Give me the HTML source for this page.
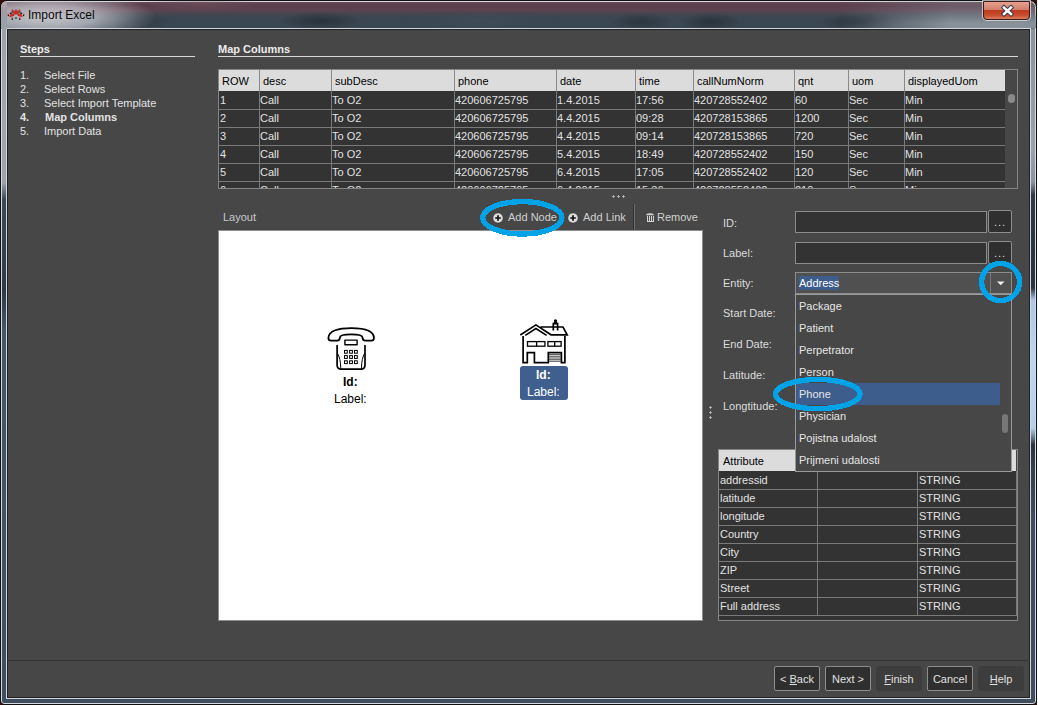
<!DOCTYPE html><html><head><meta charset="utf-8"><style>*{margin:0;padding:0;box-sizing:border-box}
html,body{width:1038px;height:705px;overflow:hidden;background:#3a0c0c}
body{position:relative;font-family:"Liberation Sans",sans-serif;font-size:11px;color:#e2e2e2}
.a{position:absolute}
.t{position:absolute;line-height:13px;white-space:nowrap}
#frame{left:0;top:0;width:1037px;height:705px;border-radius:7px 7px 4px 4px;border:1px solid #101010;
 box-shadow:inset 0 0 0 1px #d8dce2;
 background:linear-gradient(180deg,#6a5058 0px,#5a3e4c 4px,#5e4250 9px,#44464f 13px,#3a4652 17px,#3a4652 27px,#9aa2aa 28px,#a0a6ae 120px,#9aa2aa 182px,#3c4a58 198px,#2e3a46 290px,#44586a 330px,#3e4e5e 700px);}
#tglow{left:1px;top:1px;width:1035px;height:27px;border-radius:6px 6px 0 0;
 background:radial-gradient(ellipse 110px 26px at 45px 16px,rgba(220,218,222,0.88) 0,rgba(205,205,212,0.7) 45%,rgba(210,210,215,0) 100%),
  radial-gradient(ellipse 40px 9px at 320px 20px,rgba(30,38,46,0.6),rgba(30,38,46,0)),
  radial-gradient(ellipse 30px 9px at 140px 20px,rgba(40,50,60,0.5),rgba(40,50,60,0)),
  radial-gradient(ellipse 30px 9px at 710px 21px,rgba(30,38,46,0.6),rgba(30,38,46,0)),
  radial-gradient(ellipse 30px 9px at 640px 21px,rgba(30,38,46,0.5),rgba(30,38,46,0)),
  radial-gradient(ellipse 40px 9px at 860px 21px,rgba(30,38,46,0.6),rgba(30,38,46,0)),
  radial-gradient(ellipse 80px 10px at 480px 20px,rgba(75,88,100,0.35),rgba(75,88,100,0)),
  radial-gradient(ellipse 60px 8px at 200px 3px,rgba(120,90,100,0.4),rgba(120,90,100,0));}
#rglow{left:840px;top:1px;width:196px;height:27px;border-radius:0 6px 0 0;
 background:linear-gradient(180deg,rgba(150,156,164,0.25) 0,rgba(150,156,164,0.35) 8px,rgba(140,148,156,0.95) 22px);
 -webkit-mask-image:linear-gradient(90deg,transparent 0,#000 110px);}
#content{left:6px;top:28px;width:1025px;height:671px;background:#474747;border:1px solid #d4d8dc;box-shadow:inset 0 0 0 1px #1e2228}
#close{left:983px;top:1px;width:47px;height:19px;border-radius:0 0 4px 4px;border:1px solid #3a1a1a;box-shadow:0 0 0 1px rgba(235,235,240,0.7);
 background:linear-gradient(180deg,#e8a090 0%,#d0806c 45%,#c03a20 50%,#c85030 80%,#d88060 100%)}
.hl{position:absolute;height:1px;background:#d8d8d8}
.grid{position:absolute;background:#7a7a7a}
.hdr{position:absolute;background:#dcdcdc;color:#000}
.fld{position:absolute;background:#333;border:1px solid #8c8c8c}
.btn{position:absolute;border:1px solid #8e8e8e;border-radius:2px;background:#2f2f2f}
.btnd{position:absolute;border-radius:3px;background:#3d3d3d}
</style></head><body>
<div id="frame" class="a"></div>
<div id="tglow" class="a"></div>
<div id="rglow" class="a"></div>
<div class="a" style="left:1031px;top:29px;width:4px;height:670px;background:linear-gradient(180deg,#8a929a 0px,#9aa2aa 121px,#8a949e 153px,#2e3a46 166px,#2a3440 259px,#a8c8e8 271px,#b8d8f4 331px,#b0d0f0 399px,#2a3440 416px,#34414e 441px,#3e4e5e 491px,#3e4e5e 670px)"></div>
<div id="content" class="a"></div>
<div class="a" style="left:1037px;top:0;width:1px;height:705px;background:#fff"></div>
<div class="a" id="close"><svg width="47" height="19" viewBox="0 0 47 19" style="position:absolute;left:-1px;top:-1px"><path d="M21 6.6 L28 13 M28 6.6 L21 13" stroke="#2a3444" stroke-width="4.4" stroke-linecap="square"/><path d="M21 6.6 L28 13 M28 6.6 L21 13" stroke="#fff" stroke-width="2.6" stroke-linecap="square"/></svg></div>
<div class="a" style="left:1px;top:1px;width:6px;height:28px;border-radius:6px 0 0 0;background:linear-gradient(180deg,#b8a8ae 0,#a49ca2 8px,#9aa0a8 20px,#9aa2aa 28px)"></div>
<svg class="a" style="left:4px;top:6px" width="24" height="18" viewBox="0 0 24 18" style="filter:blur(0.3px)"><g fill="#c42c24"><rect x="9.2" y="4.4" width="5.6" height="4.2" rx="1"/><rect x="7.6" y="3.6" width="1.8" height="2"/><rect x="14.6" y="3.6" width="1.8" height="2"/><path d="M9.8 7.2 L5.6 8.8 L5.8 11.2 L10.4 9.8 Z M14.2 7.2 L18.4 8.8 L18.2 11.2 L13.6 9.8 Z"/><rect x="3.6" y="7.8" width="1.3" height="1.3"/><rect x="19.1" y="7.8" width="1.3" height="1.3"/><rect x="7.5" y="11.6" width="1.4" height="1.2"/><rect x="15.1" y="11.6" width="1.4" height="1.2"/></g><g fill="#1c1c1c"><rect x="5.8" y="6.6" width="2" height="1.4" rx="0.6"/><rect x="16.2" y="6.6" width="2" height="1.4" rx="0.6"/><rect x="3.8" y="9" width="1.2" height="1.2"/><rect x="19" y="9" width="1.2" height="1.2"/><rect x="7.6" y="12.6" width="1.4" height="1.3"/><rect x="15" y="12.6" width="1.4" height="1.3"/><rect x="10.8" y="11.6" width="2.4" height="1" rx="0.5"/><rect x="10.8" y="3.6" width="2.4" height="1" rx="0.5" fill="#555"/><rect x="7.6" y="5.6" width="1.6" height="1" /><rect x="14.8" y="5.6" width="1.6" height="1"/></g></svg>
<div class="t" style="left:28px;top:9px;font-size:12px;color:#0a0a0a">Import Excel</div>
<div class="t" style="left:20px;top:43px;font-weight:bold;color:#ececec">Steps</div>
<div class="hl" style="left:20px;top:56px;width:175px"></div>
<div class="t" style="left:20px;top:69px;">1.</div>
<div class="t" style="left:44px;top:69px;">Select File</div>
<div class="t" style="left:20px;top:83px;">2.</div>
<div class="t" style="left:44px;top:83px;">Select Rows</div>
<div class="t" style="left:20px;top:97px;">3.</div>
<div class="t" style="left:44px;top:97px;">Select Import Template</div>
<div class="t" style="left:20px;top:111px;font-weight:bold">4.</div>
<div class="t" style="left:45px;top:111px;font-weight:bold">Map Columns</div>
<div class="t" style="left:20px;top:125px;">5.</div>
<div class="t" style="left:44px;top:125px;">Import Data</div>
<div class="t" style="left:218px;top:43px;font-weight:bold;color:#ececec">Map Columns</div>
<div class="hl" style="left:218px;top:56px;width:800px"></div>
<div class="a" style="left:218px;top:69px;width:800px;height:120px;border:1px solid #858585;background:#474747"></div>
<div class="a" style="left:219px;top:70px;width:786px;height:118px;overflow:hidden;background:#333">
<div class="hdr" style="left:0;top:0;width:786px;height:21px"></div>
<div class="t" style="left:3px;top:5px;color:#000">ROW</div>
<div class="a" style="left:40px;top:0;width:1px;height:21px;background:#8a8a8a"></div>
<div class="t" style="left:44px;top:5px;color:#000">desc</div>
<div class="a" style="left:112px;top:0;width:1px;height:21px;background:#8a8a8a"></div>
<div class="t" style="left:116px;top:5px;color:#000">subDesc</div>
<div class="a" style="left:235px;top:0;width:1px;height:21px;background:#8a8a8a"></div>
<div class="t" style="left:239px;top:5px;color:#000">phone</div>
<div class="a" style="left:337px;top:0;width:1px;height:21px;background:#8a8a8a"></div>
<div class="t" style="left:341px;top:5px;color:#000">date</div>
<div class="a" style="left:416px;top:0;width:1px;height:21px;background:#8a8a8a"></div>
<div class="t" style="left:420px;top:5px;color:#000">time</div>
<div class="a" style="left:474px;top:0;width:1px;height:21px;background:#8a8a8a"></div>
<div class="t" style="left:478px;top:5px;color:#000">callNumNorm</div>
<div class="a" style="left:575px;top:0;width:1px;height:21px;background:#8a8a8a"></div>
<div class="t" style="left:579px;top:5px;color:#000">qnt</div>
<div class="a" style="left:629px;top:0;width:1px;height:21px;background:#8a8a8a"></div>
<div class="t" style="left:633px;top:5px;color:#000">uom</div>
<div class="a" style="left:685px;top:0;width:1px;height:21px;background:#8a8a8a"></div>
<div class="t" style="left:689px;top:5px;color:#000">displayedUom</div>
<div class="t" style="left:1px;top:24px">1</div>
<div class="t" style="left:41px;top:24px">Call</div>
<div class="t" style="left:113px;top:24px">To O2</div>
<div class="t" style="left:236px;top:24px">420606725795</div>
<div class="t" style="left:338px;top:24px">1.4.2015</div>
<div class="t" style="left:417px;top:24px">17:56</div>
<div class="t" style="left:475px;top:24px">420728552402</div>
<div class="t" style="left:576px;top:24px">60</div>
<div class="t" style="left:630px;top:24px">Sec</div>
<div class="t" style="left:686px;top:24px">Min</div>
<div class="grid" style="left:0;top:39px;width:786px;height:1px"></div>
<div class="t" style="left:1px;top:42px">2</div>
<div class="t" style="left:41px;top:42px">Call</div>
<div class="t" style="left:113px;top:42px">To O2</div>
<div class="t" style="left:236px;top:42px">420606725795</div>
<div class="t" style="left:338px;top:42px">4.4.2015</div>
<div class="t" style="left:417px;top:42px">09:28</div>
<div class="t" style="left:475px;top:42px">420728153865</div>
<div class="t" style="left:576px;top:42px">1200</div>
<div class="t" style="left:630px;top:42px">Sec</div>
<div class="t" style="left:686px;top:42px">Min</div>
<div class="grid" style="left:0;top:57px;width:786px;height:1px"></div>
<div class="t" style="left:1px;top:60px">3</div>
<div class="t" style="left:41px;top:60px">Call</div>
<div class="t" style="left:113px;top:60px">To O2</div>
<div class="t" style="left:236px;top:60px">420606725795</div>
<div class="t" style="left:338px;top:60px">4.4.2015</div>
<div class="t" style="left:417px;top:60px">09:14</div>
<div class="t" style="left:475px;top:60px">420728153865</div>
<div class="t" style="left:576px;top:60px">720</div>
<div class="t" style="left:630px;top:60px">Sec</div>
<div class="t" style="left:686px;top:60px">Min</div>
<div class="grid" style="left:0;top:75px;width:786px;height:1px"></div>
<div class="t" style="left:1px;top:78px">4</div>
<div class="t" style="left:41px;top:78px">Call</div>
<div class="t" style="left:113px;top:78px">To O2</div>
<div class="t" style="left:236px;top:78px">420606725795</div>
<div class="t" style="left:338px;top:78px">5.4.2015</div>
<div class="t" style="left:417px;top:78px">18:49</div>
<div class="t" style="left:475px;top:78px">420728552402</div>
<div class="t" style="left:576px;top:78px">150</div>
<div class="t" style="left:630px;top:78px">Sec</div>
<div class="t" style="left:686px;top:78px">Min</div>
<div class="grid" style="left:0;top:93px;width:786px;height:1px"></div>
<div class="t" style="left:1px;top:96px">5</div>
<div class="t" style="left:41px;top:96px">Call</div>
<div class="t" style="left:113px;top:96px">To O2</div>
<div class="t" style="left:236px;top:96px">420606725795</div>
<div class="t" style="left:338px;top:96px">6.4.2015</div>
<div class="t" style="left:417px;top:96px">17:05</div>
<div class="t" style="left:475px;top:96px">420728552402</div>
<div class="t" style="left:576px;top:96px">120</div>
<div class="t" style="left:630px;top:96px">Sec</div>
<div class="t" style="left:686px;top:96px">Min</div>
<div class="grid" style="left:0;top:111px;width:786px;height:1px"></div>
<div class="t" style="left:1px;top:114px">6</div>
<div class="t" style="left:41px;top:114px">Call</div>
<div class="t" style="left:113px;top:114px">To O2</div>
<div class="t" style="left:236px;top:114px">420606725795</div>
<div class="t" style="left:338px;top:114px">6.4.2015</div>
<div class="t" style="left:417px;top:114px">15:36</div>
<div class="t" style="left:475px;top:114px">420728552402</div>
<div class="t" style="left:576px;top:114px">210</div>
<div class="t" style="left:630px;top:114px">Sec</div>
<div class="t" style="left:686px;top:114px">Min</div>
<div class="grid" style="left:0;top:129px;width:786px;height:1px"></div>
<div class="grid" style="left:40px;top:21px;width:1px;height:100px"></div>
<div class="grid" style="left:112px;top:21px;width:1px;height:100px"></div>
<div class="grid" style="left:235px;top:21px;width:1px;height:100px"></div>
<div class="grid" style="left:337px;top:21px;width:1px;height:100px"></div>
<div class="grid" style="left:416px;top:21px;width:1px;height:100px"></div>
<div class="grid" style="left:474px;top:21px;width:1px;height:100px"></div>
<div class="grid" style="left:575px;top:21px;width:1px;height:100px"></div>
<div class="grid" style="left:629px;top:21px;width:1px;height:100px"></div>
<div class="grid" style="left:685px;top:21px;width:1px;height:100px"></div>
<div class="grid" style="left:786px;top:21px;width:1px;height:100px"></div>
</div>
<div class="a" style="left:1008px;top:94px;width:7px;height:9px;border-radius:4px;background:#8a8a8a"></div>
<div class="a" style="left:612px;top:196px;width:3px;height:1px;background:#a4a4a4"></div><div class="a" style="left:613px;top:195px;width:1px;height:3px;background:#a4a4a4"></div><div class="a" style="left:613px;top:196px;width:1px;height:1px;background:#c0c0c0"></div>
<div class="a" style="left:617px;top:196px;width:3px;height:1px;background:#a4a4a4"></div><div class="a" style="left:618px;top:195px;width:1px;height:3px;background:#a4a4a4"></div><div class="a" style="left:618px;top:196px;width:1px;height:1px;background:#c0c0c0"></div>
<div class="a" style="left:622px;top:196px;width:3px;height:1px;background:#a4a4a4"></div><div class="a" style="left:623px;top:195px;width:1px;height:3px;background:#a4a4a4"></div><div class="a" style="left:623px;top:196px;width:1px;height:1px;background:#c0c0c0"></div>
<div class="t" style="left:223px;top:211px;color:#c8c8c8">Layout</div>
<svg class="a" style="left:492px;top:212px" width="12" height="12" viewBox="0 0 12 12"><circle cx="6" cy="6" r="5.1" fill="#dcdcdc" stroke="#303030" stroke-width="0.5"/><path d="M6 3.2 V8.8 M3.2 6 H8.8" stroke="#111" stroke-width="1.7"/></svg>
<div class="t" style="left:508px;top:211px;color:#d0d0d0">Add Node</div>
<svg class="a" style="left:567px;top:212px" width="12" height="12" viewBox="0 0 12 12"><circle cx="6" cy="6" r="5.1" fill="#dcdcdc" stroke="#303030" stroke-width="0.5"/><path d="M6 3.2 V8.8 M3.2 6 H8.8" stroke="#111" stroke-width="1.7"/></svg>
<div class="t" style="left:583px;top:211px;color:#d0d0d0">Add Link</div>
<div class="a" style="left:633px;top:204px;width:1px;height:26px;background:#333"></div><div class="a" style="left:634px;top:204px;width:1px;height:26px;background:#6c6c6c"></div>
<svg class="a" style="left:645px;top:212px" width="10" height="11" viewBox="0 0 10 11"><path d="M1 3.3 Q1.2 1.2 5 1.2 Q8.8 1.2 9 3.3 Z" fill="#d4d4d4"/><g fill="#d4d4d4" shape-rendering="crispEdges"><rect x="2" y="4" width="1" height="6"/><rect x="4" y="4" width="1" height="6"/><rect x="6" y="4" width="1" height="6"/><rect x="8" y="4" width="1" height="6"/><rect x="2" y="9" width="7" height="1"/></g></svg>
<div class="t" style="left:657px;top:211px;color:#d0d0d0">Remove</div>
<div class="a" style="left:218px;top:230px;width:485px;height:391px;background:#fff;border:1px solid #8e8e8e"></div>
<div class="a" style="left:709px;top:407px;width:3px;height:1px;background:#a4a4a4"></div><div class="a" style="left:710px;top:406px;width:1px;height:3px;background:#a4a4a4"></div><div class="a" style="left:710px;top:407px;width:1px;height:1px;background:#c0c0c0"></div>
<div class="a" style="left:709px;top:412px;width:3px;height:1px;background:#a4a4a4"></div><div class="a" style="left:710px;top:411px;width:1px;height:3px;background:#a4a4a4"></div><div class="a" style="left:710px;top:412px;width:1px;height:1px;background:#c0c0c0"></div>
<div class="a" style="left:709px;top:417px;width:3px;height:1px;background:#a4a4a4"></div><div class="a" style="left:710px;top:416px;width:1px;height:3px;background:#a4a4a4"></div><div class="a" style="left:710px;top:417px;width:1px;height:1px;background:#c0c0c0"></div>
<div class="t" style="left:723px;top:217px;color:#dcdcdc">ID:</div>
<div class="t" style="left:723px;top:247px;color:#dcdcdc">Label:</div>
<div class="t" style="left:723px;top:277px;color:#dcdcdc">Entity:</div>
<div class="t" style="left:723px;top:307px;color:#dcdcdc">Start Date:</div>
<div class="t" style="left:723px;top:338px;color:#dcdcdc">End Date:</div>
<div class="t" style="left:723px;top:369px;color:#dcdcdc">Latitude:</div>
<div class="t" style="left:723px;top:400px;color:#dcdcdc">Longtitude:</div>
<div class="fld" style="left:795px;top:211px;width:192px;height:22px"></div>
<div class="btn" style="left:988px;top:210px;width:24px;height:23px"></div>
<div class="t" style="left:994px;top:216px;color:#ddd;letter-spacing:1px">...</div>
<div class="fld" style="left:795px;top:242px;width:192px;height:22px"></div>
<div class="btn" style="left:988px;top:241px;width:24px;height:23px"></div>
<div class="t" style="left:994px;top:247px;color:#ddd;letter-spacing:1px">...</div>
<div class="a" style="left:795px;top:272px;width:217px;height:22px;background:#505050;border:1px solid #8c8c8c"></div>
<div class="a" style="left:990px;top:273px;width:1px;height:20px;background:#777"></div>
<div class="a" style="left:799px;top:276px;width:40px;height:14px;background:#3d5d8c"></div>
<div class="t" style="left:799px;top:277px;color:#fff">Address</div>
<svg class="a" style="left:997px;top:281px" width="8" height="5"><path d="M0 0.5 H7.5 L3.75 4.2 Z" fill="#f0f0f0"/></svg>
<div class="a" style="left:718px;top:449px;width:300px;height:172px;border:1px solid #858585;background:#474747"></div>
<div class="hdr" style="left:719px;top:450px;width:297px;height:21px"></div>
<div class="t" style="left:723px;top:455px;color:#000">Attribute</div>
<div class="a" style="left:719px;top:471px;width:298px;height:149px;background:#333"></div>
<div class="t" style="left:720px;top:474px;">addressid</div>
<div class="t" style="left:919px;top:474px;">STRING</div>
<div class="grid" style="left:719px;top:489px;width:298px;height:1px"></div>
<div class="t" style="left:720px;top:492px;">latitude</div>
<div class="t" style="left:919px;top:492px;">STRING</div>
<div class="grid" style="left:719px;top:507px;width:298px;height:1px"></div>
<div class="t" style="left:720px;top:510px;">longitude</div>
<div class="t" style="left:919px;top:510px;">STRING</div>
<div class="grid" style="left:719px;top:525px;width:298px;height:1px"></div>
<div class="t" style="left:720px;top:528px;">Country</div>
<div class="t" style="left:919px;top:528px;">STRING</div>
<div class="grid" style="left:719px;top:543px;width:298px;height:1px"></div>
<div class="t" style="left:720px;top:546px;">City</div>
<div class="t" style="left:919px;top:546px;">STRING</div>
<div class="grid" style="left:719px;top:561px;width:298px;height:1px"></div>
<div class="t" style="left:720px;top:564px;">ZIP</div>
<div class="t" style="left:919px;top:564px;">STRING</div>
<div class="grid" style="left:719px;top:579px;width:298px;height:1px"></div>
<div class="t" style="left:720px;top:582px;">Street</div>
<div class="t" style="left:919px;top:582px;">STRING</div>
<div class="grid" style="left:719px;top:597px;width:298px;height:1px"></div>
<div class="t" style="left:720px;top:600px;">Full address</div>
<div class="t" style="left:919px;top:600px;">STRING</div>
<div class="grid" style="left:719px;top:615px;width:298px;height:1px"></div>
<div class="grid" style="left:817px;top:471px;width:1px;height:145px"></div>
<div class="grid" style="left:917px;top:471px;width:1px;height:145px"></div>
<div class="grid" style="left:1016px;top:471px;width:1px;height:145px"></div>
<div class="a" style="left:795px;top:294px;width:217px;height:178px;background:#474747;border:1px solid #9a9a9a"></div>
<div class="a" style="left:796px;top:383px;width:204px;height:22px;background:#3d5d8c"></div>
<div class="t" style="left:799px;top:300px;color:#e6e6e6">Package</div>
<div class="t" style="left:799px;top:322px;color:#e6e6e6">Patient</div>
<div class="t" style="left:799px;top:344px;color:#e6e6e6">Perpetrator</div>
<div class="t" style="left:799px;top:366px;color:#e6e6e6">Person</div>
<div class="t" style="left:799px;top:388px;color:#e6e6e6">Phone</div>
<div class="t" style="left:799px;top:410px;color:#e6e6e6">Physician</div>
<div class="t" style="left:799px;top:432px;color:#e6e6e6">Pojistna udalost</div>
<div class="t" style="left:799px;top:454px;color:#e6e6e6">Prijmeni udalosti</div>
<div class="a" style="left:1002px;top:414px;width:6px;height:19px;border-radius:3px;background:#777"></div>
<svg class="a" style="left:322px;top:322px" width="58" height="52" viewBox="0 0 58 52"><g fill="none" stroke="#000" stroke-linejoin="round" stroke-linecap="round"><path stroke-width="1.8" d="M6.4 16 C6.4 8.5 17 6.1 29.2 6.1 C41.4 6.1 51.9 8.5 51.9 16 C51.9 18 51 18.7 49.5 18.7 L43.5 18.7 C41.2 18.7 40.5 17.5 40.5 15.5 C40.5 13.2 37.5 12.3 29.2 12.3 C20.9 12.3 17.9 13.2 17.9 15.5 C17.9 17.5 17.2 18.7 15 18.7 L9 18.7 C7.3 18.7 6.4 18 6.4 16 Z"/><path stroke-width="1.7" d="M15.1 23.6 L15.1 43 Q15.1 47.1 19.2 47.1 L39 47.1 Q43 47.1 43 43 L43 23.6"/><path stroke-width="1" d="M15.6 31.5 Q18.6 36 18.8 46.6 M42.5 31.5 Q39.6 36 39.4 46.6"/><rect x="22.9" y="18.1" width="12.2" height="4.7" stroke-width="1.4"/></g><g fill="none" stroke="#000" stroke-width="1"><rect x="22.5" y="28.4" width="2.8" height="2.8"/><rect x="22.5" y="33.6" width="2.8" height="2.8"/><rect x="22.5" y="38.8" width="2.8" height="2.8"/><rect x="27.6" y="28.4" width="2.8" height="2.8"/><rect x="27.6" y="33.6" width="2.8" height="2.8"/><rect x="27.6" y="38.8" width="2.8" height="2.8"/><rect x="32.5" y="28.4" width="2.8" height="2.8"/><rect x="32.5" y="33.6" width="2.8" height="2.8"/><rect x="32.5" y="38.8" width="2.8" height="2.8"/></g></svg>
<svg class="a" style="left:516px;top:316px" width="56" height="50" viewBox="0 0 56 50"><g fill="none" stroke="#000" stroke-width="1.7" stroke-linejoin="miter" stroke-linecap="butt"><path d="M4.3 19 L19.9 8.9 L35 18.8 L51.2 18.8 L47 11 L24.5 11"/><path d="M9.3 19.4 L19.9 12.6 L30.6 19.4"/><path d="M37.3 14.5 L37.3 7.6 L41.6 7.6 L41.6 14.5"/><path d="M7.1 20 L7.1 46.6 L11.3 46.6 L11.3 36.6 L18.4 36.6 L18.4 46.6 L32.3 46.6 L32.3 36.6 L45.4 36.6 L45.4 46.6 L48.9 46.6 L48.9 20"/><g stroke-width="1.3"><rect x="11.5" y="25.6" width="17.4" height="4.6"/><path d="M20.6 25.6 V30.2"/><rect x="31.9" y="25.6" width="13.2" height="4.6"/><path d="M38.7 25.6 V30.2"/></g></g><g stroke="#000" stroke-width="0.7"><path d="M33 38.6 H44.7 M33 40.3 H44.7 M33 42 H44.7 M33 43.7 H44.7 M33 45.3 H44.7"/></g><circle cx="39.5" cy="4.8" r="1.6" fill="#000"/><path d="M37.8 6.4 H41.3" stroke="#000" stroke-width="1.2"/></svg>
<div class="a" style="left:520px;top:366px;width:48px;height:34px;border-radius:3px;background:#3f5f8f"></div>
<div class="t" style="left:343px;top:376px;color:#000;font-weight:bold;font-size:12px">Id:</div>
<div class="t" style="left:334px;top:393px;color:#000;font-size:12px">Label:</div>
<div class="t" style="left:536px;top:369px;color:#fff;font-weight:bold;font-size:12px">Id:</div>
<div class="t" style="left:527px;top:386px;color:#fff;font-size:12px">Label:</div>
<div class="a" style="left:7px;top:660px;width:1023px;height:1px;background:#333"></div>
<div class="btn" style="left:774px;top:666px;width:46px;height:25px"></div>
<div class="t" style="left:774px;top:673px;width:46px;text-align:center;color:#e0e0e0">&lt; <u>B</u>ack</div>
<div class="btn" style="left:825px;top:666px;width:46px;height:25px"></div>
<div class="t" style="left:825px;top:673px;width:46px;text-align:center;color:#e0e0e0">Next &gt;</div>
<div class="btnd" style="left:876px;top:666px;width:46px;height:25px"></div>
<div class="t" style="left:876px;top:673px;width:46px;text-align:center;color:#e0e0e0"><u>F</u>inish</div>
<div class="btn" style="left:927px;top:666px;width:46px;height:25px"></div>
<div class="t" style="left:927px;top:673px;width:46px;text-align:center;color:#e0e0e0">Cancel</div>
<div class="btnd" style="left:978px;top:666px;width:46px;height:25px"></div>
<div class="t" style="left:978px;top:673px;width:46px;text-align:center;color:#e0e0e0"><u>H</u>elp</div>
<svg class="a" style="left:0;top:0" width="1038" height="705"><g fill="none" stroke="#00a2e8" stroke-width="5.4" shape-rendering="crispEdges"><ellipse cx="522.3" cy="217.8" rx="39.6" ry="16.2"/><ellipse cx="1000.6" cy="282" rx="19" ry="18.6"/><ellipse cx="817.8" cy="394.1" rx="42.2" ry="14.6"/></g></svg>
</body></html>
